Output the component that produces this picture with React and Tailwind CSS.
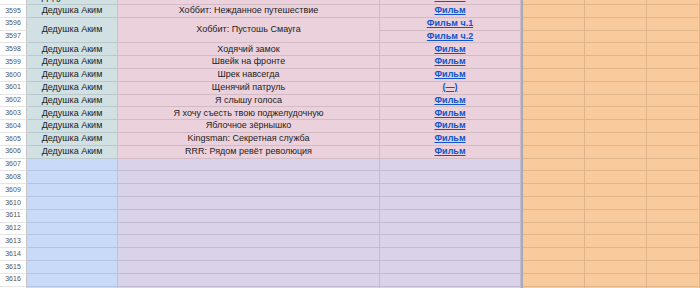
import React from "react";

const filled = [
  { n: 3594, b: "Дедушка Аким", c: "Хоббит: Битва пяти воинств", d: "Фильм" },
  { n: 3595, b: "Дедушка Аким", c: "Хоббит: Нежданное путешествие", d: "Фильм" },
  { n: 3596, b: "Дедушка Аким", c: "Хоббит: Пустошь Смауга", d: "Фильм ч.1", span: true },
  { n: 3597, d: "Фильм ч.2", merged: true },
  { n: 3598, b: "Дедушка Аким", c: "Ходячий замок", d: "Фильм" },
  { n: 3599, b: "Дедушка Аким", c: "Швейк на фронте", d: "Фильм" },
  { n: 3600, b: "Дедушка Аким", c: "Шрек навсегда", d: "Фильм" },
  { n: 3601, b: "Дедушка Аким", c: "Щенячий патруль", d: "(—)" },
  { n: 3602, b: "Дедушка Аким", c: "Я слышу голоса", d: "Фильм" },
  { n: 3603, b: "Дедушка Аким", c: "Я хочу съесть твою поджелудочную", d: "Фильм" },
  { n: 3604, b: "Дедушка Аким", c: "Яблочное зёрнышко", d: "Фильм" },
  { n: 3605, b: "Дедушка Аким", c: "Kingsman: Секретная служба", d: "Фильм" },
  { n: 3606, b: "Дедушка Аким", c: "RRR: Рядом ревёт революция", d: "Фильм" },
];

const empty = [];
for (let n = 3607; n <= 3617; n++) empty.push(n);

const cell = "border-b border-r border-black/10 flex items-center justify-center overflow-hidden whitespace-nowrap";

const Header = ({ n }) => (
  <div className={`${cell} bg-white text-[7px] text-[#555] border-r-[#c6c6c6]`}>{n}</div>
);

const Orange = () => (
  <>
    <div className="bg-[#a7aab6]" />
    <div className={`${cell} bg-[#f9cb9c] border-[#e4b788]`} />
    <div className={`${cell} bg-[#f9cb9c] border-[#e4b788]`} />
    <div className={`${cell} bg-[#f9cb9c] border-[#e4b788]`} />
  </>
);

const Link = ({ children }) => (
  <span className="text-[#1155cc] font-bold underline">{children}</span>
);

export default function App() {
  return (
    <div
      className="w-[700px] h-[288px] overflow-hidden bg-white text-[9px] text-[#222]"
      style={{ fontFamily: '"Liberation Sans", Arial, sans-serif' }}
    >
      <div className="-mt-[7.8px] grid grid-cols-[27px_91px_262px_141px_2px_62px_62px_1fr] auto-rows-[12.8px]">
        {filled.map((r) => (
          <React.Fragment key={r.n}>
            <Header n={r.n} />
            {!r.merged && (
              <>
                <div className={`${cell} bg-[#d0e0e3] ${r.span ? "row-span-2" : ""}`}>{r.b}</div>
                <div className={`${cell} bg-[#ead1dc] ${r.span ? "row-span-2" : ""}`}>{r.c}</div>
              </>
            )}
            <div className={`${cell} bg-[#ead1dc]`}>
              <Link>{r.d}</Link>
            </div>
            <Orange />
          </React.Fragment>
        ))}
        {empty.map((n) => (
          <React.Fragment key={n}>
            <Header n={n} />
            <div className={`${cell} bg-[#c9daf8]`} />
            <div className={`${cell} bg-[#d9d2e9]`} />
            <div className={`${cell} bg-[#d9d2e9]`} />
            <Orange />
          </React.Fragment>
        ))}
      </div>
    </div>
  );
}
